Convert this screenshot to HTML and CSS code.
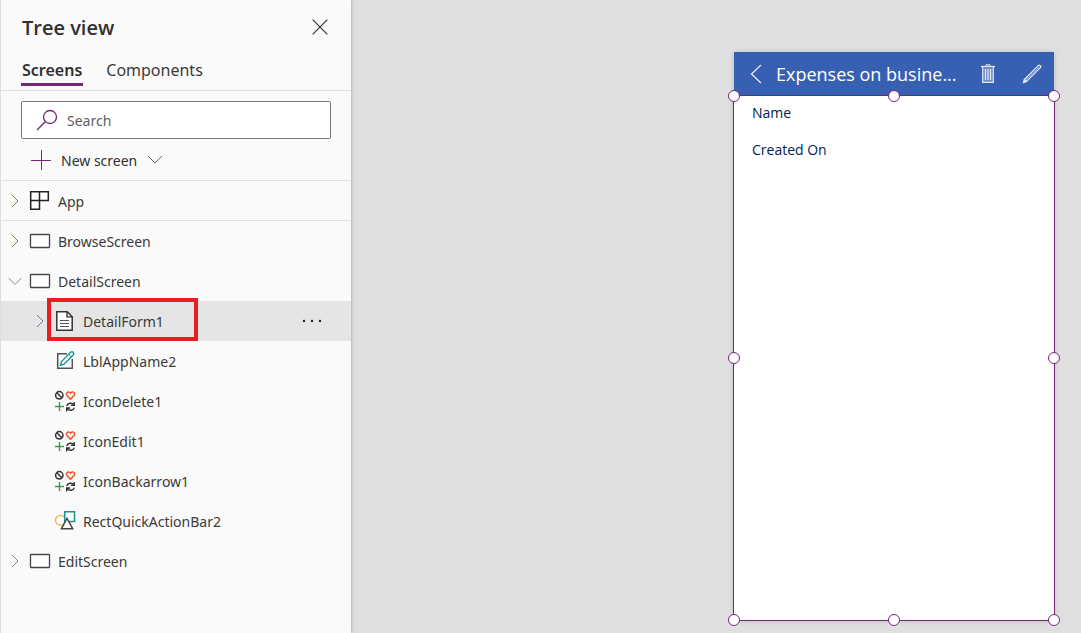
FILE: index.html
```html
<!DOCTYPE html>
<html lang="en">
<head>
<meta charset="utf-8">
<meta name="viewport" content="width=device-width, initial-scale=1">
<title>Tree view</title>
<link rel="stylesheet" href="styles.css">
</head>
<body>
<svg class="defs" aria-hidden="true">
  <symbol id="right" viewBox="0 0 14 14"><path d="M4 1l6 6-6 6" fill="none" stroke="currentColor"/></symbol>
  <symbol id="down" viewBox="0 0 14 14"><path d="M.5 4L7 10.500l6.500-6.500" fill="none" stroke="currentColor"/></symbol>
  <symbol id="screen" viewBox="0 0 22 22"><rect x="1.500" y="4.500" width="19" height="13" rx=".5" fill="#fff" stroke="#484644" stroke-width="1.300"/></symbol>
  <symbol id="icons" viewBox="0 0 22 22">
    <g fill="none">
      <circle cx="5.300" cy="5.300" r="3.700" stroke="#333" stroke-width="1.500"/><path d="M2.800 2.800l5 5" stroke="#333" stroke-width="1.500"/>
      <path d="M16.500 9.200L12.900 5.600C11 3.500 14.500.2 16.500 3.200 18.500.2 22 3.500 20.100 5.600z" stroke="#f04e23" stroke-width="1.400"/>
      <path d="M5.500 12v9M1 16.500h9" stroke="#3a9b42" stroke-width="1.400"/>
      <path d="M12.700 15.800c.7-3 5.500-3.600 7.200-.8M20.300 12v3.400h-3.500M20.300 17.700c-.7 3-5.500 3.600-7.200.8M12.700 21.400V18h3.500" stroke="#333" stroke-width="1.400"/>
    </g>
  </symbol>
</svg>
<div class="app">
  <aside class="panel">
    <header class="head">
      <div class="title-row">
        <h1 class="title">Tree view</h1>
        <button class="btn close" aria-label="Close"><svg width="16" height="16" viewBox="0 0 16 16"><path d="M.7.700l14.600 14.600M15.300.700L.7 15.300" stroke="#333" stroke-width="1.200"/></svg></button>
      </div>
      <nav class="tabs">
        <button class="btn tab tab-active">Screens</button>
        <button class="btn tab">Components</button>
      </nav>
    </header>
    <div class="tools">
      <label class="search">
        <svg width="22" height="22" viewBox="0 0 22 22" fill="none" stroke="#742774" stroke-width="1.300"><circle cx="14" cy="8" r="6.500"/><path d="M9.300 12.700L1 21"/></svg>
        <input class="search-input" type="text" placeholder="Search" aria-label="Search">
      </label>
      <button class="btn new">
        <svg width="20" height="20" viewBox="0 0 20 20"><path d="M10.500 0v20M0 10.500h20" stroke="#742774"/></svg>
        <span class="label">New screen</span>
        <svg width="16" height="16" viewBox="0 0 16 16"><path d="M1 4l7 7 7-7" fill="none" stroke="#4f7378"/></svg>
      </button>
    </div>
    <ul class="tree">
      <li class="row row-line">
        <button class="btn toggle gold" aria-label="Expand App"><svg width="14" height="14"><use href="#right"/></svg></button>
        <svg width="22" height="22" viewBox="0 0 22 22"><path d="M1.700 1.700h17.600v8.800h-8.800v8.800H1.700zM1.700 10.500h8.800V1.700" fill="#fff" stroke="#222" stroke-width="1.500"/></svg>
        <span class="label">App</span>
      </li>
      <li class="row">
        <button class="btn toggle gold" aria-label="Expand BrowseScreen"><svg width="14" height="14"><use href="#right"/></svg></button>
        <svg width="22" height="22"><use href="#screen"/></svg>
        <span class="label">BrowseScreen</span>
      </li>
      <li class="row">
        <button class="btn toggle" aria-label="Collapse DetailScreen"><svg width="14" height="14"><use href="#down"/></svg></button>
        <svg width="22" height="22"><use href="#screen"/></svg>
        <span class="label">DetailScreen</span>
      </li>
      <li class="row child selected">
        <button class="btn toggle slate" aria-label="Expand DetailForm1"><svg width="14" height="14"><use href="#right"/></svg></button>
        <svg width="22" height="22" viewBox="0 0 22 22"><path d="M2.800 1.700h10.400l5 5v13.600H2.800z" fill="#fff" stroke="#333" stroke-width="1.500"/><path d="M13 1.700v5.200h5.200" fill="none" stroke="#333" stroke-width="1.400"/><path d="M6 10.500h9M6 13.500h9M6 16.500h9" stroke="#555" stroke-width="1.200"/></svg>
        <span class="label">DetailForm1</span>
        <button class="btn more" aria-label="More actions"><svg width="20" height="4" viewBox="0 0 20 4" fill="#222"><circle cx="2" cy="2" r="1.200"/><circle cx="10" cy="2" r="1.200"/><circle cx="18" cy="2" r="1.200"/></svg></button>
        <span class="callout"></span>
      </li>
      <li class="row child">
        <span class="toggle"></span>
        <svg width="22" height="22" viewBox="0 0 22 22" fill="none"><path d="M13 3.700H3.700v14.600h14.600V9" stroke="#555" stroke-width="1.500"/><path d="M6.500 15.300l1-3.800 9.200-9.300c1.600-1.500 4.200.8 2.600 2.600L10 14.200z" fill="#fff" stroke="#129490" stroke-width="1.400"/><path d="M14.700 4.300l2.600 2.600" stroke="#129490"/></svg>
        <span class="label">LblAppName2</span>
      </li>
      <li class="row child">
        <span class="toggle"></span>
        <svg width="22" height="22"><use href="#icons"/></svg>
        <span class="label">IconDelete1</span>
      </li>
      <li class="row child">
        <span class="toggle"></span>
        <svg width="22" height="22"><use href="#icons"/></svg>
        <span class="label">IconEdit1</span>
      </li>
      <li class="row child">
        <span class="toggle"></span>
        <svg width="22" height="22"><use href="#icons"/></svg>
        <span class="label">IconBackarrow1</span>
      </li>
      <li class="row child">
        <span class="toggle"></span>
        <svg width="22" height="22" viewBox="0 0 22 22"><circle cx="6.500" cy="10.300" r="5" fill="#fff" stroke="#eeb04f" stroke-width="1.300"/><path d="M10.700 1.700h9.800v9.800h-9.800z" fill="#fff" stroke="#129490" stroke-width="1.500"/><path d="M13 8.300l5.800 10.500H7.300z" fill="#fff" stroke="#444" stroke-width="1.400"/></svg>
        <span class="label">RectQuickActionBar2</span>
      </li>
      <li class="row">
        <button class="btn toggle" aria-label="Expand EditScreen"><svg width="14" height="14"><use href="#right"/></svg></button>
        <svg width="22" height="22"><use href="#screen"/></svg>
        <span class="label">EditScreen</span>
      </li>
    </ul>
  </aside>
  <main class="canvas">
    <section class="phone">
      <header class="bar">
        <button class="btn" aria-label="Back"><svg width="12" height="20" viewBox="0 0 12 20"><path d="M11 1L1.500 10l9.500 9" fill="none" stroke="#e6ebf7" stroke-width="1.300"/></svg></button>
        <h2 class="bar-title">Expenses on busine...</h2>
        <button class="btn" aria-label="Delete"><svg width="14" height="20" viewBox="0 0 14 20" fill="none" stroke="#e1e7f5"><path d="M5 2V.8h4V2" /><path d="M0 2.500h14" stroke-width="1.300"/><path d="M1.700 3v15.300h10.600V3" fill="#6f8cc8" stroke-width="1.200"/><path d="M4.500 5v11M7 5v11M9.500 5v11" stroke-width="1.200"/></svg></button>
        <button class="btn edit" aria-label="Edit"><svg width="20" height="20" viewBox="0 0 20 20" fill="none" stroke="#e6ebf7" stroke-width="1.300"><path d="M1.500 18.500l.8-2.800L16.300 1.600c1.200-1.200 3.200.7 2 2L4.300 17.700zM2.300 15.700l2 2"/><path d="M3.500 16.500L17 3" stroke-width=".5"/></svg></button>
      </header>
      <div class="form">
        <p class="field">Name</p>
        <p class="field">Created On</p>
        <div class="selection">
          <i class="handle left top"></i><i class="handle center top"></i><i class="handle right top"></i>
          <i class="handle left middle"></i><i class="handle right middle"></i>
          <i class="handle left bottom"></i><i class="handle center bottom"></i><i class="handle right bottom"></i>
        </div>
      </div>
    </section>
  </main>
</div>
</body>
</html>
```
FILE: styles.css
```css
* { box-sizing: border-box; }
body { margin: 0; font: 14px/20px "Noto Sans", "Open Sans", sans-serif; color: #3b3a39; }
h1, h2, p, ul { margin: 0; padding: 0; }
svg { display: block; flex: none; }
.defs { position: absolute; width: 0; height: 0; }
.btn { display: flex; align-items: center; margin: 0; padding: 0; border: 0; background: none; color: inherit; font: inherit; }
.label { padding-top: 2px; }

.app { display: grid; grid-template-columns: 351px 1fr; min-height: 100vh; }
.panel { z-index: 1; background: #fafafa; border-left: 1px solid #dfdfdf; box-shadow: 0 0 4px rgba(0, 0, 0, .3); }

.head { padding: 11px 23px 4px 20px; border-bottom: 1px solid #dfdfdf; }
.title-row { display: flex; align-items: center; justify-content: space-between; height: 32px; }
.title { padding: 2px 1px 0; font: 600 20px/32px "Open Sans", sans-serif; color: #323130; }
.tabs { display: flex; gap: 22px; margin-top: 16px; }
.tab { height: 27px; padding: 0 1px 2px; border-bottom: 3px solid transparent; font-size: 16px; line-height: 22px; }
.tab-active { border-color: #742774; color: #323130; font-weight: 600; }

.tools { display: flex; flex-direction: column; gap: 10px; padding: 10px 20px; border-bottom: 1px solid #dfdfdf; }
.search { display: flex; align-items: center; gap: 9px; height: 38px; padding: 0 14px; background: #fff; border: 1px solid #7a7876; border-radius: 2px; }
.search-input { flex: 1; min-width: 0; padding: 2px 0 0; border: 0; outline: 0; background: none; color: #323130; font: inherit; }
.search-input::placeholder { color: #605e5c; opacity: 1; }
.new { gap: 10px; height: 21px; padding-left: 10px; color: #323130; }

.tree { list-style: none; }
.row { position: relative; display: flex; align-items: center; height: 40px; padding: 0 29px 0 7px; }
.row > svg { margin: 0 7px; }
.row-line { border-bottom: 1px solid #dfdfdf; }
.child { padding-left: 32px; }
.selected { background: #e5e5e5; }
.toggle { width: 14px; color: #8a8886; }
.gold { color: #907f42; }
.slate { color: #77779c; }
.more { margin-left: auto; }
.callout { position: absolute; top: -3px; left: 46px; width: 151px; height: 43px; border: 4px solid #ea1c1f; }

.canvas { display: flex; justify-content: flex-end; padding: 52px 27px 13px; background: #dfdfdf; }
.phone { display: flex; flex-direction: column; width: 320px; background: #fff; box-shadow: 0 1px 5px rgba(0, 0, 0, .18); }
.bar { display: flex; align-items: center; height: 44px; padding: 0 12px 0 16px; background: #3860b2; color: #fff; }
.bar-title { flex: 1; margin: 0 0 0 14px; white-space: nowrap; font: 500 18px/26px "Open Sans", sans-serif; }
.edit { margin-left: 27px; }
.form { position: relative; flex: 1; display: flex; flex-direction: column; gap: 17px; padding: 7px 18px; }
.field { font-family: "Open Sans", sans-serif; color: #001c55; }
.selection { position: absolute; inset: -1px; border: 1px solid #742774; }
.handle { position: absolute; width: 12px; height: 12px; margin: -6px; background: #fff; border: 1px solid #742774; border-radius: 50%; }
.left { left: 0; }
.center { left: 50%; }
.right { left: 100%; }
.top { top: 0; }
.middle { top: 50%; }
.bottom { top: 100%; }
```
